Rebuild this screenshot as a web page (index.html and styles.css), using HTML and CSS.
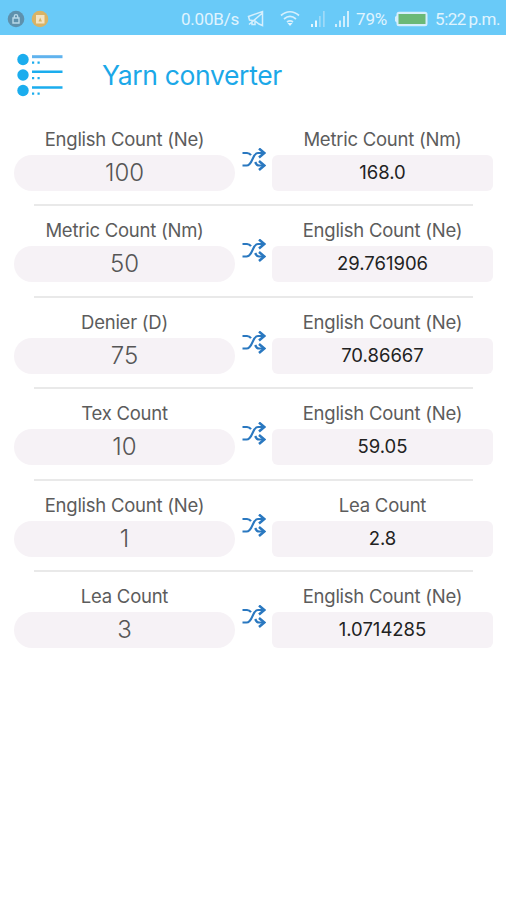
FILE: index.html
```
<!DOCTYPE html>
<html lang="en">
<head>
  <title>Yarn converter</title>
  <meta charset="UTF-8">
  <meta name="viewport" content="width=device-width, initial-scale=1">
  <link rel="stylesheet" href="styles.css">
</head>
<body>

<svg width="0" height="0" class="defs">
  <symbol id="shuffle" viewBox="0 0 24 24">
    <path d="M.5 5H5c2 0 3 .8 4 2.200M.5 17.500H4.500C11 17.500 10 5 16 5h5M13.200 14c.8 2.200 2 3.500 4 3.500h4" fill="none" stroke="#2a78c0" stroke-width="2.200"/>
    <path d="M17 .5L22.300 5 17 9.500M17 13l5.300 4.500L17 22" fill="none" stroke="#2a78c0" stroke-width="2.500"/>
  </symbol>
</svg>

<div class="statusbar">
  <svg class="notif" width="42" height="18" viewBox="0 0 42 18">
    <circle cx="9" cy="9" r="8.300" fill="#5e91ad"/>
    <path d="M6 8h6v5H6zM7.300 8V6.300a1.700 1.700 0 0 1 3.400 0V8" fill="none" stroke="#b9d9e9" stroke-width="1.400"/>
    <circle cx="33" cy="9" r="8.300" fill="#d8b365"/>
    <rect x="29" y="5" width="8.500" height="8.500" fill="#f3e4c4"/>
    <path d="M31.500 11.500l1.700-4 1.800 4z" fill="#d8b365"/>
  </svg>
  <span class="speed">0.00B/s</span>
  <svg class="mute" width="18" height="18" viewBox="0 0 18 18">
    <path d="M1.500 6.500l14-5v14L12 14 8 11l-5.500-1zM2 14.500L16 2.500M5 11v3.500h3V12" fill="none" stroke="#d5effd" stroke-width="1.500"/>
  </svg>
  <svg class="wifi" width="20" height="17" viewBox="0 0 20 17">
    <path d="M1 5.500c5.500-5 12.500-5 18 0M4 9c3.700-3.300 8.300-3.300 12 0M7 12c2-1.600 4-1.600 6 0" fill="none" stroke="#d5effd" stroke-width="1.700"/>
    <path d="M7.500 13h5L10 16z" fill="#e6f6ff"/>
  </svg>
  <svg class="signal" width="14" height="16" viewBox="0 0 14 16">
    <path d="M0 13h2v3H0zM4 9.500h2V16H4z" fill="#e6f6ff"/>
    <path d="M8 5h1.700v11H8zM12 0h1.700v16H12z" fill="#9fdaf8"/>
  </svg>
  <svg class="signal signal2" width="14" height="16" viewBox="0 0 14 16">
    <path d="M0 13h2v3H0zM4 9.500h2V16H4zM8 5h2v11H8zM12 0h2v16h-2z" fill="#d0eefd"/>
  </svg>
  <span class="percent">79%</span>
  <svg class="battery" width="34" height="16" viewBox="0 0 34 16">
    <path d="M5 .8h26a2.500 2.500 0 0 1 2.500 2.500v9.400a2.500 2.500 0 0 1-2.500 2.500H5a2.500 2.500 0 0 1-2.500-2.500V11.500L1 10V6l1.500-1.500V3.300A2.500 2.500 0 0 1 5 .8z" fill="#d5effd"/>
    <rect x="4.500" y="3" width="27" height="10" fill="#6bb977"/>
  </svg>
  <span class="clock">5:22 p.m.</span>
</div>

<div class="header">
  <svg class="menu" width="46" height="44" viewBox="0 0 46 44">
    <g fill="#1badee">
      <circle cx="6" cy="6.500" r="5.700"/>
      <circle cx="6" cy="22" r="5.700"/>
      <circle cx="6" cy="37.500" r="5.700"/>
      <path d="M15 17.500h30.500v2.500H15zM15 33.300h30.500v2.500H15z"/>
      <path d="M15 8.500h2.200v2.300H15zM20.500 8.500h2.200v2.300h-2.200zM15 24h2.200v2.300H15zM20.500 24h2.200v2.300h-2.200zM15 39.500h2.200v2.300H15zM20.500 39.500h2.200v2.300h-2.200z"/>
    </g>
    <path d="M15 2.200h30.500v3H15z" fill="#60b3ee"/>
  </svg>
  <h1>Yarn converter</h1>
</div>

<div class="rows">
  <div class="row">
    <div class="col"><label>English Count (Ne)</label><div class="field">100</div></div>
    <svg class="shuffle"><use href="#shuffle"/></svg>
    <div class="col"><label>Metric Count (Nm)</label><div class="result">168.0</div></div>
  </div>
  <div class="row">
    <div class="col"><label>Metric Count (Nm)</label><div class="field">50</div></div>
    <svg class="shuffle"><use href="#shuffle"/></svg>
    <div class="col"><label>English Count (Ne)</label><div class="result">29.761906</div></div>
  </div>
  <div class="row">
    <div class="col"><label>Denier (D)</label><div class="field">75</div></div>
    <svg class="shuffle"><use href="#shuffle"/></svg>
    <div class="col"><label>English Count (Ne)</label><div class="result">70.86667</div></div>
  </div>
  <div class="row">
    <div class="col"><label>Tex Count</label><div class="field">10</div></div>
    <svg class="shuffle"><use href="#shuffle"/></svg>
    <div class="col"><label>English Count (Ne)</label><div class="result">59.05</div></div>
  </div>
  <div class="row">
    <div class="col"><label>English Count (Ne)</label><div class="field">1</div></div>
    <svg class="shuffle"><use href="#shuffle"/></svg>
    <div class="col"><label>Lea Count</label><div class="result">2.8</div></div>
  </div>
  <div class="row">
    <div class="col"><label>Lea Count</label><div class="field">3</div></div>
    <svg class="shuffle"><use href="#shuffle"/></svg>
    <div class="col"><label>English Count (Ne)</label><div class="result">1.0714285</div></div>
  </div>
</div>

</body>
</html>
```
FILE: styles.css
```
* { box-sizing: border-box; }
body {
  margin: 0;
  background: #fff;
  font-family: Inter, "Liberation Sans", sans-serif;
}
.defs { display: block; }

/* phone status bar */
.statusbar {
  display: flex; align-items: center;
  height: 35px; padding: 2px 6px 0 7px;
  background: #69caf8; color: #e0f4fe;
  font-family: Roboto, sans-serif; font-size: 17px;
  white-space: nowrap;
}
.notif { margin-right: auto; }
.speed { letter-spacing: -0.2px; }
.mute { margin-left: 8px; }
.wifi { margin-left: 15px; }
.signal { margin-left: 11px; }
.signal2 { margin-left: 10px; }
.percent { margin-left: 7px; letter-spacing: -0.2px; }
.battery { margin-left: 7px; }
.clock { margin-left: 7px; letter-spacing: -0.5px; word-spacing: -1px; }

.header {
  display: flex; align-items: center;
  height: 79px; padding-left: 17px;
}
h1 {
  margin: 0 0 0 39px;
  font-size: 26.500px; font-weight: 400; line-height: 36px;
  letter-spacing: -0.350px;
  color: #1ba8e8;
}

/* one conversion per row */
.row {
  position: relative;
  display: flex;
  height: 91.4px; padding: 14px 13px 0 14px;
}
.row:not(:last-child)::after {
  content: "";
  position: absolute; left: 34px; right: 33px; bottom: 0;
  height: 2px; background: #e9e9e9;
  transform: translateY(1px);
}
.col { width: 221px; text-align: center; }
label {
  display: block;
  height: 27px; line-height: 23px;
  font-size: 18.500px; letter-spacing: -0.250px; color: #5c5c5c;
}
.field, .result { height: 36px; background: #f6f2f6; }
.field {
  border-radius: 18px;
  font-size: 24px; font-weight: 300; line-height: 35px; color: #555;
}
.result {
  border-radius: 6px;
  font-size: 18.500px; line-height: 35px; color: #222;
}
.shuffle {
  flex: none;
  width: 24px; height: 24px;
  margin: 20px 6px 0 7px;
}
```
